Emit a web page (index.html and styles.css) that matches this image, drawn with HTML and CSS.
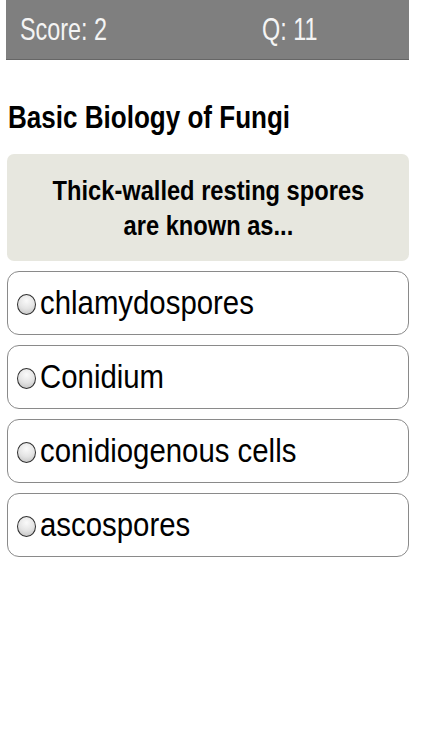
FILE: index.html
```html
<!DOCTYPE html>
<html lang="en">
<head>
<meta charset="utf-8">
<title>Quiz</title>
<link rel="stylesheet" href="styles.css">
</head>
<body>
<div class="page">
  <header class="topbar">
    <span class="score">Score: 2</span>
    <span class="qnum">Q: 11</span>
  </header>
  <h1 class="title"><span class="squeeze">Basic Biology of Fungi</span></h1>
  <div class="question"><span class="qtext">Thick-walled resting spores<br>are known as...</span></div>
  <ul class="options">
    <li class="option"><span class="radio"></span><span class="label">chlamydospores</span></li>
    <li class="option"><span class="radio"></span><span class="label">Conidium</span></li>
    <li class="option"><span class="radio"></span><span class="label">conidiogenous cells</span></li>
    <li class="option"><span class="radio"></span><span class="label">ascospores</span></li>
  </ul>
</div>
</body>
</html>
```

FILE: styles.css
```css
html, body {
  margin: 0;
  padding: 0;
  background: #ffffff;
}
body {
  font-family: "Liberation Sans", Arial, Helvetica, sans-serif;
  color: #000;
}
.page {
  width: 422px;
  height: 750px;
  overflow: hidden;
}
.topbar {
  margin: 0 13px 0 6px;
  height: 59px;
  background: #7f7f7f;
  border-bottom: 1px solid #666666;
  display: flex;
  align-items: center;
  color: #f4f4f4;
  font-size: 32px;
  padding-left: 14px;
}
.score,
.qnum {
  display: inline-block;
  transform: scaleX(0.73);
  transform-origin: left center;
  white-space: nowrap;
}
.score {
  width: 242px;
  flex: none;
}
.title {
  margin: 40px 0 0 8px;
  font-size: 31px;
  font-weight: bold;
  line-height: 36px;
}
.squeeze {
  display: inline-block;
  transform: scaleX(0.84);
  transform-origin: left center;
  white-space: nowrap;
}
.question {
  margin: 18px 13px 0 7px;
  height: 107px;
  background: #e7e7df;
  border-radius: 7px;
  display: flex;
  align-items: center;
  justify-content: center;
  text-align: center;
  font-size: 28px;
  font-weight: bold;
  line-height: 35px;
}
.qtext {
  display: inline-block;
  transform: scaleX(0.845);
  transform-origin: center center;
  white-space: nowrap;
}
.options {
  list-style: none;
  margin: 10px 13px 0 7px;
  padding: 0;
  display: flex;
  flex-direction: column;
  gap: 10px;
}
.option {
  height: 64px;
  box-sizing: border-box;
  border: 1px solid #8a8a8a;
  border-radius: 12px;
  display: flex;
  align-items: center;
  padding-left: 9px;
  font-size: 33px;
}
.radio {
  width: 19px;
  height: 21px;
  box-sizing: border-box;
  border: 1.5px solid #2e2e2e;
  border-radius: 50%;
  background: radial-gradient(circle at 50% 30%, #fafafa 0%, #e4e4e4 50%, #bdbdbd 100%);
  margin-top: 3px;
  flex: none;
}
.label {
  display: inline-block;
  margin-left: 4px;
  transform: scaleX(0.89);
  transform-origin: left center;
  white-space: nowrap;
}
```
